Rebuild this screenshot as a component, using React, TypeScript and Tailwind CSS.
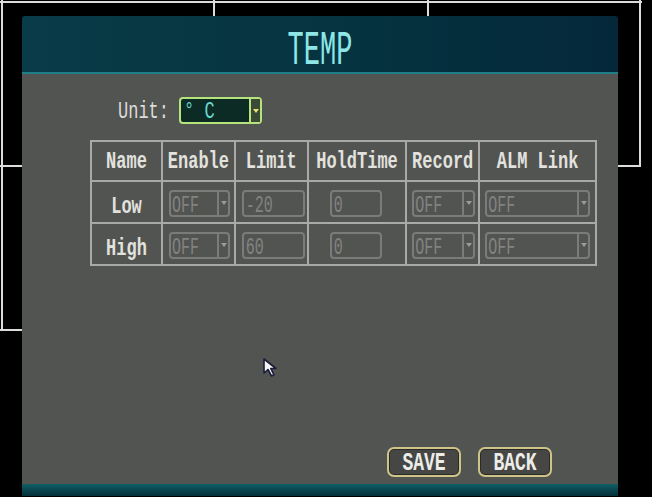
import React from "react";

const MONO = "font-['Liberation_Mono','Courier_New',monospace]";

function Tall({ children, s = "scale-y-[1.35]" }: { children: React.ReactNode; s?: string }) {
  return <span className={`inline-block ${s}`}>{children}</span>;
}

function Arrow({ color }: { color: string }) {
  return (
    <svg width="6" height="4" viewBox="0 0 6 4">
      <path d="M0 0 H6 L3 4 Z" fill={color} />
    </svg>
  );
}

function DimSelect({ width }: { width: string }) {
  return (
    <div className={`mt-[2px] flex h-[27px] ${width} rounded-[4px] border-2 border-[#7b7c7a]`}>
      <div className="flex flex-1 items-center pl-[1px] pt-[8px] text-[15px] text-[#828381]">
        <Tall s="scale-y-[1.55]">OFF</Tall>
      </div>
      <div className="flex w-[11px] items-center justify-center border-l-2 border-[#7b7c7a]">
        <Arrow color="#9a9b99" />
      </div>
    </div>
  );
}

function DimInput({ width, value }: { width: string; value: string }) {
  return (
    <div className={`mt-[2px] flex h-[27px] ${width} items-center rounded-[4px] border-2 border-[#7b7c7a] pl-[2px] pt-[8px] text-[15px] text-[#828381]`}>
      <Tall s="scale-y-[1.55]">{value}</Tall>
    </div>
  );
}

const rows = [
  { name: "Low", limit: "-20" },
  { name: "High", limit: "60" },
];

export default function App() {
  return (
    <div className={`relative h-[497px] w-[652px] overflow-hidden bg-black ${MONO}`}>
      {/* camera split lines behind the menu */}
      <div className="absolute left-0 top-[1px] h-[2px] w-[642px] bg-[#dcdcdc]" />
      <div className="absolute left-[1px] top-0 h-[331px] w-[2px] bg-[#dcdcdc]" />
      <div className="absolute left-[213px] top-0 h-[200px] w-[2px] bg-[#dcdcdc]" />
      <div className="absolute left-[427px] top-0 h-[200px] w-[2px] bg-[#dcdcdc]" />
      <div className="absolute left-[639px] top-0 h-[166px] w-[2px] bg-[#dcdcdc]" />
      <div className="absolute left-0 top-[165px] h-[2px] w-[641px] bg-[#dcdcdc]" />
      <div className="absolute left-0 top-[329px] h-[2px] w-[100px] bg-[#dcdcdc]" />

      <div className="relative ml-[22px] mt-[16px] flex w-[596px] flex-col">
        <div className="flex h-[58px] items-center justify-center rounded-t-[3px] border-b-2 border-[#1f7f86] bg-gradient-to-r from-[#083c48] via-[#063440] to-[#04283a] pt-[16px]">
          <span className="text-[27px] text-[#8fe6e6]">
            <Tall s="scale-y-[1.8]">TEMP</Tall>
          </span>
        </div>

        <div className="flex h-[410px] flex-col bg-[#525452]">
          <div className="ml-[96px] mt-[23px] flex h-[27px] items-center gap-[10px]">
            <span className="pt-[3px] text-[17px] text-[#dcdcd8]">
              <Tall s="scale-y-[1.4]">Unit:</Tall>
            </span>
            <div className="flex h-[27px] w-[83px] rounded-[4px] border-2 border-[#b6e47c] bg-[#0b2b24]">
              <div className="flex flex-1 items-center pl-[3px] pt-[3px] text-[17px] text-[#68d6d2]">
                <Tall s="scale-y-[1.4]">°&nbsp;C</Tall>
              </div>
              <div className="flex w-[11px] items-center justify-center border-l-2 border-[#b6e47c] bg-[#3a4a36]">
                <Arrow color="#e8e070" />
              </div>
            </div>
          </div>

          <table className="ml-[68px] mt-[16px] w-[507px] border-collapse text-[17px] text-[#e2e2de]">
            <thead>
              <tr className="h-[40px]">
                {[
                  ["Name", "w-[72px]"],
                  ["Enable", "w-[73px]"],
                  ["Limit", "w-[73px]"],
                  ["HoldTime", "w-[99px]"],
                  ["Record", "w-[73px]"],
                  ["ALM Link", "w-[117px]"],
                ].map(([h, w]) => (
                  <th key={h} className={`${w} border-2 border-[#a9aaa7] p-0 pt-[2px] text-center font-bold`}>
                    <Tall s="scale-y-[1.4]">{h}</Tall>
                  </th>
                ))}
              </tr>
            </thead>
            <tbody>
              {rows.map((r) => (
                <tr key={r.name} className="h-[42px]">
                  <td className="border-2 border-[#a9aaa7] pt-[10px] text-center font-bold">
                    <Tall s="scale-y-[1.4]">{r.name}</Tall>
                  </td>
                  <td className="border-2 border-[#a9aaa7] pl-[6px]">
                    <DimSelect width="w-[61px]" />
                  </td>
                  <td className="border-2 border-[#a9aaa7] pl-[6px]">
                    <DimInput width="w-[63px]" value={r.limit} />
                  </td>
                  <td className="border-2 border-[#a9aaa7] pl-[21px]">
                    <DimInput width="w-[52px]" value="0" />
                  </td>
                  <td className="border-2 border-[#a9aaa7] pl-[5px]">
                    <DimSelect width="w-[63px]" />
                  </td>
                  <td className="border-2 border-[#a9aaa7] pl-[5px]">
                    <DimSelect width="w-[105px]" />
                  </td>
                </tr>
              ))}
            </tbody>
          </table>

          <div className="mb-[7px] mr-[66px] mt-auto flex justify-end gap-[17px]">
            {["SAVE", "BACK"].map((b) => (
              <div
                key={b}
                className="flex h-[30px] w-[74px] items-center justify-center rounded-[7px] border-2 border-[#cfc487] bg-[#464744] pt-[3px] text-[18px] font-bold text-[#ecece8] shadow-[inset_0_0_0_1px_#2a2a28]"
              >
                <Tall s="scale-y-[1.4]">{b}</Tall>
              </div>
            ))}
          </div>
        </div>

        <div className="h-[12px] bg-gradient-to-b from-[#0f5f66] to-[#06303a]" />
      </div>

      {/* mouse pointer */}
      <svg className="absolute left-[262px] top-[357px]" width="20" height="22" viewBox="0 0 20 22">
        <path d="M2 2 L2 16 L6 12.5 L9.5 19 L12 17.8 L8.8 11.5 L14 11.5 Z" fill="#f4f4f4" stroke="#1a1c3a" strokeWidth="1.6" strokeLinejoin="round" />
      </svg>
    </div>
  );
}
